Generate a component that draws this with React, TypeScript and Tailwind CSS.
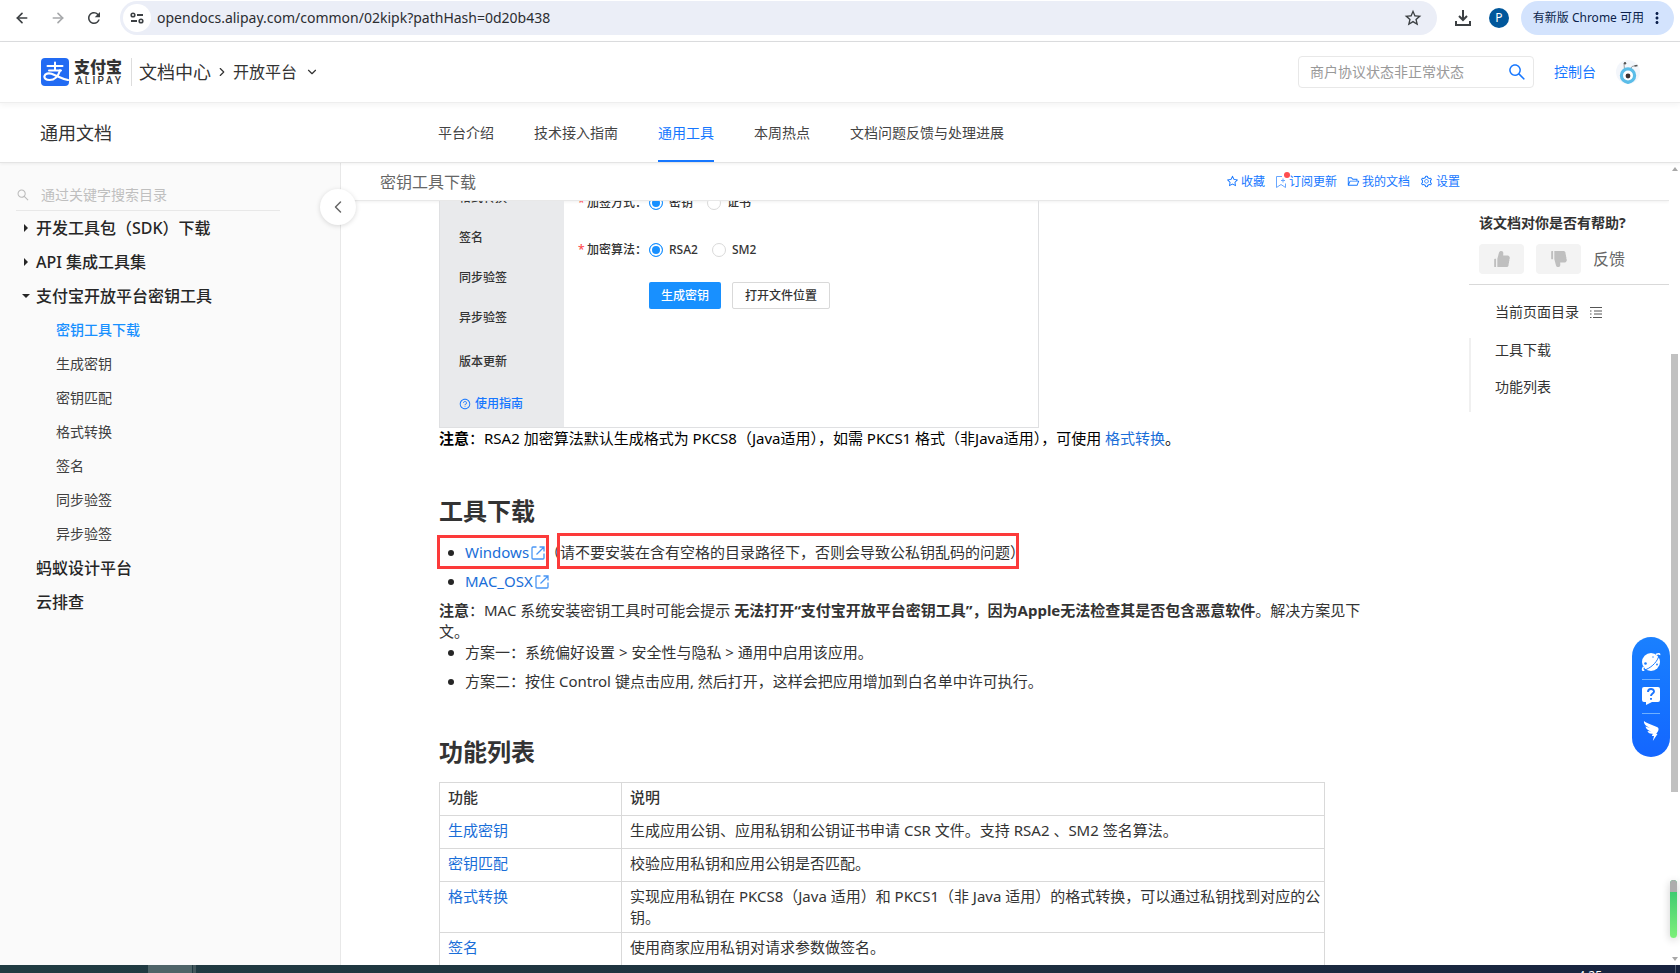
import type { ReactNode } from 'react';
import { useState } from 'react';
import {
  ArrowLeft,
  ArrowRight,
  ChevronDown,
  ChevronLeft,
  ChevronRight,
} from 'lucide-react';
import { MdRefresh, MdStarBorder, MdMoreVert } from 'react-icons/md';
import {
  AiFillDislike,
  AiFillLike,
  AiOutlineFolderOpen,
  AiOutlineQuestionCircle,
  AiOutlineSearch,
  AiOutlineSetting,
  AiOutlineStar,
} from 'react-icons/ai';

interface MenuItem {
  label: string;
  state?: 'open' | 'closed';
  children?: string[];
}

const tabs = ['平台介绍', '技术接入指南', '通用工具', '本周热点', '文档问题反馈与处理进展'];

const menu: MenuItem[] = [
  { label: '开发工具包（SDK）下载', state: 'closed' },
  { label: 'API 集成工具集', state: 'closed' },
  {
    label: '支付宝开放平台密钥工具',
    state: 'open',
    children: ['密钥工具下载', '生成密钥', '密钥匹配', '格式转换', '签名', '同步验签', '异步验签'],
  },
  { label: '蚂蚁设计平台' },
  { label: '云排查' },
];

const features = [
  { name: '生成密钥', desc: '生成应用公钥、应用私钥和公钥证书申请 CSR 文件。支持 RSA2 、SM2 签名算法。' },
  { name: '密钥匹配', desc: '校验应用私钥和应用公钥是否匹配。' },
  { name: '格式转换', desc: '实现应用私钥在 PKCS8（Java 适用）和 PKCS1（非 Java 适用）的格式转换，可以通过私钥找到对应的公钥。' },
  { name: '签名', desc: '使用商家应用私钥对请求参数做签名。' },
];

function BrowserBar() {
  return (
    <div className="flex h-[42px] shrink-0 items-start border-b border-[#dcdddf] bg-white pt-px pr-[6px] pl-3 text-[#3c4043]">
      <div className="flex h-[34px] w-[108px] shrink-0 items-center gap-4">
        <button aria-label="后退" className="flex size-5 items-center justify-center">
          <ArrowLeft className="size-4" strokeWidth={2.5} />
        </button>
        <button aria-label="前进" className="flex size-5 items-center justify-center text-[#a6a8aa]">
          <ArrowRight className="size-4" strokeWidth={2.5} />
        </button>
        <button aria-label="重新加载" className="flex size-5 items-center justify-center">
          <MdRefresh className="size-[18px]" />
        </button>
      </div>
      <div className="flex h-[34px] flex-1 items-center rounded-full bg-[#ebeef7] pr-[14px] pl-[3px]">
        <span className="flex size-7 items-center justify-center rounded-full bg-white">
          <svg viewBox="0 0 14 12" className="h-3 w-[14px]" fill="none" stroke="#3c4043" strokeWidth="2">
            <circle cx="3" cy="3" r="1.8" strokeWidth="1.6" />
            <path d="M7 3h6M1 9h6" />
            <circle cx="11" cy="9" r="1.8" strokeWidth="1.6" />
          </svg>
        </span>
        <input
          aria-label="地址"
          className="ml-[6px] flex-1 bg-transparent font-['Noto_Sans'] text-sm text-[#2b2d31] outline-none"
          defaultValue="opendocs.alipay.com/common/02kipk?pathHash=0d20b438"
        />
        <button aria-label="收藏此页">
          <MdStarBorder className="size-5" />
        </button>
      </div>
      <div className="flex h-[34px] items-center">
        <button aria-label="下载" className="ml-4 flex size-5 items-center justify-center">
          <svg viewBox="0 0 16 16" className="size-4" fill="none" stroke="currentColor" strokeWidth="2">
            <path d="M8 0v10M4 6l4 4 4-4M1 11v4h14v-4" />
          </svg>
        </button>
        <button className="ml-4 flex size-5 items-center justify-center rounded-full bg-[#01579b] text-xs text-white">
          P
        </button>
        <button className="ml-3 flex h-[34px] items-center rounded-full bg-[#d3e3fd] pr-2 pl-3 text-xs whitespace-nowrap text-[#0b1f4b]">
          <span className="font-['Noto_Sans','Noto_Sans_CJK_SC',sans-serif]">有新版 Chrome 可用</span>
          <MdMoreVert className="ml-1 size-[18px]" />
        </button>
      </div>
    </div>
  );
}

function AlipayMark() {
  return (
    <svg viewBox="0 0 28 28" className="size-7" fill="none" stroke="#fff" strokeLinecap="round">
      <rect width="28" height="28" rx="4" fill="#226bf3" stroke="none" />
      <path d="M6.500 8h15M14 4.500v8M8 12.500h12" strokeWidth="2" />
      <path d="M19 12.500c-1.500 5-5 9.500-10.500 9.500-3.500 0-5.500-1.800-5-4 .6-2.400 4-3.200 7-2.200 5 1.600 9.500 4.700 16.500 6.200" strokeWidth="2.200" />
    </svg>
  );
}

function Mascot() {
  return (
    <svg viewBox="0 0 24 24" className="size-6">
      <circle cx="12" cy="12" r="12" fill="#f3f6fb" />
      <path d="M8.500 10 8 3.500M14 10l2-3.500 4-1" stroke="#9aa0a6" strokeWidth="1" fill="none" />
      <circle cx="9" cy="3.300" r="1.200" fill="#555" />
      <path d="M18.500 6l3-.6" stroke="#555" strokeWidth="1.500" />
      <circle cx="12" cy="15.500" r="6.600" fill="#fff" stroke="#5bbde8" strokeWidth="3.200" />
      <path d="M9 22.500h6l-3 1.500z" fill="#5bbde8" />
      <circle cx="12" cy="16" r="2.400" fill="#3b3030" />
    </svg>
  );
}

function SiteHeader() {
  return (
    <header className="z-20 flex h-[61px] shrink-0 items-center border-b border-[#eee] bg-white pr-10 pl-[41px] shadow-[0_2px_6px_rgba(0,0,0,0.05)]">
      <a href="#" className="flex items-center gap-[5px]">
        <AlipayMark />
        <span className="flex w-12 flex-col text-[#333]">
          <span className="text-base leading-[18px] font-black">支付宝</span>
          <span className="flex justify-between pr-px pl-0.5 font-['Roboto'] text-[10px] leading-[10px] font-medium">
            {'ALIPAY'.split('').map((c, i) => (
              <span key={i}>{c}</span>
            ))}
          </span>
        </span>
      </a>
      <span className="mr-[7px] ml-[9px] h-7 w-px bg-[#ddd]" />
      <a href="#" className="text-lg text-[#333]">文档中心</a>
      <ChevronRight className="mx-1 size-[14px] text-[#333]" />
      <button className="flex items-center text-base text-[#333]">
        开放平台
        <ChevronDown className="ml-2 size-[14px]" />
      </button>
      <div className="flex-1" />
      <label className="flex h-8 w-[236px] items-center rounded border border-[#e8e8e8] pr-[6px] pl-[11px]">
        <input
          aria-label="搜索文档"
          className="min-w-0 flex-1 text-sm outline-none placeholder:text-[#999]"
          placeholder="商户协议状态非正常状态"
        />
        <AiOutlineSearch className="size-5 text-[#1677ff]" />
      </label>
      <a href="#" className="ml-5 text-sm text-[#1677ff]">控制台</a>
      <button aria-label="账号" className="ml-5">
        <Mascot />
      </button>
    </header>
  );
}

function SubNav() {
  return (
    <nav className="z-10 flex h-[60px] shrink-0 border-b border-[#e4e4e4] bg-white pl-10 shadow-[0_1px_3px_rgba(0,0,0,0.06)]">
      <h1 className="flex w-[398px] items-center text-lg text-[#333]">通用文档</h1>
      <div className="flex gap-10">
        {tabs.map((tab) => (
          <a
            key={tab}
            href="#"
            className={
              tab === '通用工具'
                ? 'flex items-center border-b-2 border-[#1677ff] pt-0.5 text-sm text-[#1677ff]'
                : 'flex items-center text-sm text-[#444]'
            }
          >
            {tab}
          </a>
        ))}
      </div>
    </nav>
  );
}

function Sidebar() {
  return (
    <aside className="relative w-[341px] shrink-0 border-r border-[#e8e8e8] bg-[#fafafa]">
      <label className="mt-[17px] mr-[60px] ml-4 flex h-[31px] items-center border-b border-[#e8e8e8]">
        <AiOutlineSearch className="size-[14px] text-[#bbb]" />
        <input
          aria-label="搜索目录"
          className="ml-[11px] flex-1 bg-transparent text-sm outline-none placeholder:text-[#bfbfbf]"
          placeholder="通过关键字搜索目录"
        />
      </label>
      <ul>
        {menu.map((item) => (
          <li key={item.label}>
            <a href="#" className="flex h-[34px] items-center pl-[22px] text-base font-medium text-[#262626]">
              <span className="w-[14px]">
                {item.state && (
                  <svg viewBox="0 0 8 8" className="size-2" fill="#262626">
                    {item.state === 'open' ? <path d="M0 2h8L4 6z" /> : <path d="M2 0l4 4-4 4z" />}
                  </svg>
                )}
              </span>
              {item.label}
            </a>
            {item.children && (
              <ul>
                {item.children.map((child, i) => (
                  <li key={child}>
                    <a
                      href="#"
                      className={
                        i === 0
                          ? 'flex h-[34px] items-center pl-14 text-sm font-medium text-[#1890ff]'
                          : 'flex h-[34px] items-center pl-14 text-sm text-[#404040]'
                      }
                    >
                      {child}
                    </a>
                  </li>
                ))}
              </ul>
            )}
          </li>
        ))}
      </ul>
      <button
        aria-label="收起目录"
        className="absolute top-[26px] -right-[16px] z-10 flex size-9 items-center justify-center rounded-full bg-white text-[#666] shadow-[0_1px_5px_rgba(0,0,0,0.15)]"
      >
        <ChevronLeft className="size-5" strokeWidth={1.8} />
      </button>
    </aside>
  );
}

function DocHeader() {
  return (
    <div className="flex h-[38px] shrink-0 items-center border-b border-[#e8e8e8] pr-[209px] pl-[39px] text-[#1677ff] shadow-[0_1px_3px_rgba(0,0,0,0.06)]">
      <h2 className="text-base text-[#666]">密钥工具下载</h2>
      <div className="ml-auto flex items-center gap-[10px] text-xs">
        <a href="#" className="flex items-center gap-[2px]">
          <AiOutlineStar className="size-[13px]" />
          收藏
        </a>
        <a href="#" className="relative flex items-center gap-[2px]">
          <svg viewBox="0 0 12 14" className="h-[14px] w-3" fill="none" stroke="#69a7ff" strokeWidth="1">
            <path d="M7 1.500H1.500v11L6 9.500l4.500 3v-4M8 3.500v4M6 5.500h4" />
          </svg>
          订阅更新
          <span className="absolute -top-0.5 left-[9px] size-[6px] rounded-full bg-[#ff4d4f]" />
        </a>
        <a href="#" className="flex items-center gap-[2px]">
          <AiOutlineFolderOpen className="size-[13px]" />
          我的文档
        </a>
        <a href="#" className="flex items-center gap-[3px]">
          <AiOutlineSetting className="size-[13px]" />
          设置
        </a>
      </div>
    </div>
  );
}

function RadioRow({ label, name, options }: { label: string; name: string; options: string[] }) {
  const [value, setValue] = useState(options[0]);

  return (
    <fieldset className="flex h-[47px] items-center">
      <span className="w-[9px] text-[#ff4d4f]">*</span>
      <span className="w-[62px] whitespace-nowrap">{label}：</span>
      <div className="flex gap-[14px]">
        {options.map((option) => (
          <label key={option} className="flex items-center gap-[6px]">
            <input
              type="radio"
              name={name}
              checked={value === option}
              onChange={() => setValue(option)}
              className="size-[14px] appearance-none rounded-full border border-[#d9d9d9] bg-white checked:border-[#1890ff] checked:bg-[#1890ff] checked:shadow-[inset_0_0_0_2px_white]"
            />
            {option}
          </label>
        ))}
      </div>
    </fieldset>
  );
}

function ToolPreview() {
  return (
    <div className="-mt-6 flex h-[251px] w-[600px] border border-[#dfe0e2] text-xs font-medium text-[#333]">
      <ul className="w-[124px] bg-[#e9eaec] pl-[19px]">
        {['格式转换', '签名', '同步验签', '异步验签'].map((item) => (
          <li key={item} className="flex h-10 items-center">{item}</li>
        ))}
        <li className="mt-1 flex h-10 items-center">版本更新</li>
        <li className="mt-0.5 flex h-10 items-center gap-1 text-[#1677ff]">
          <AiOutlineQuestionCircle className="size-3" />
          使用指南
        </li>
      </ul>
      <div className="pt-px pl-[14px]">
        <RadioRow label="加签方式" name="sign" options={['密钥', '证书']} />
        <RadioRow label="加密算法" name="algo" options={['RSA2', 'SM2']} />
        <div className="mt-[9px] ml-[71px] flex gap-[11px]">
          <button className="h-[27px] rounded-xs bg-[#1890ff] px-3 text-white">生成密钥</button>
          <button className="h-[27px] rounded-xs border border-[#d9d9d9] px-3">打开文件位置</button>
        </div>
      </div>
    </div>
  );
}

function ExternalIcon() {
  return (
    <svg viewBox="0 0 14 14" className="ml-0.5 inline-block size-[14px] align-[-2px]" fill="none" stroke="#4a97f5" strokeWidth="1.300">
      <path d="M5.500 1H2a1 1 0 0 0-1 1v10a1 1 0 0 0 1 1h10a1 1 0 0 0 1-1V7.500M5.500 8.500 12.800 1.200M8.500 1H13v4.500" />
    </svg>
  );
}

function Bullet({ children }: { children: ReactNode }) {
  return (
    <li className="relative flex h-[29px] items-center">
      <span className="mr-[11px] ml-[9px] size-[6px] rounded-full bg-[#262626]" />
      <span>{children}</span>
    </li>
  );
}

function Article() {
  return (
    <article className="min-w-0 flex-1 overflow-hidden pr-[90px] pl-[98px] font-['Noto_Sans','Noto_Sans_CJK_SC',sans-serif] text-[15px] leading-[21px] text-[#333]">
      <ToolPreview />
      <p className="text-black">
        <b className="font-bold">注意</b>：RSA2 加密算法默认生成格式为 PKCS8（Java适用），如需 PKCS1 格式（非Java适用），可使用{' '}
        <a href="#" className="text-[#1a6ed8]">格式转换</a>。
      </p>
      <h2 className="mt-[46px] text-2xl leading-8 font-bold">工具下载</h2>
      <ul className="mt-[11px]">
        <Bullet>
          <a href="#" className="text-[#1a6ed8]">
            Windows
            <ExternalIcon />
          </a>
          （请不要安装在含有空格的目录路径下，否则会导致公私钥乱码的问题）
          <span className="absolute -top-[3px] -left-0.5 h-[34px] w-[112px] border-[3px] border-[#fc3a3a]" />
          <span className="absolute -top-[5px] left-[118px] h-9 w-[462px] border-[3px] border-[#fc3a3a]" />
        </Bullet>
        <Bullet>
          <a href="#" className="text-[#1a6ed8]">
            MAC_OSX
            <ExternalIcon />
          </a>
        </Bullet>
      </ul>
      <p className="mt-1">
        <b>注意</b>：MAC 系统安装密钥工具时可能会提示 <b>无法打开“支付宝开放平台密钥工具”，因为Apple无法检查其是否包含恶意软件</b>。解决方案见下文。
      </p>
      <ul className="-mt-1">
        <Bullet>方案一：系统偏好设置 &gt; 安全性与隐私 &gt; 通用中启用该应用。</Bullet>
        <Bullet>方案二：按住 Control 键点击应用, 然后打开，这样会把应用增加到白名单中许可执行。</Bullet>
      </ul>
      <h2 className="mt-10 text-2xl leading-8 font-bold">功能列表</h2>
      <table className="mt-[14px] w-[886px] table-fixed border-collapse text-left">
        <thead>
          <tr>
            <th className="h-[33px] w-[182px] border border-[#d9d9d9] py-1 pl-2 align-top font-medium">功能</th>
            <th className="h-[33px] border border-[#d9d9d9] py-1 pl-2 align-top font-medium">说明</th>
          </tr>
        </thead>
        <tbody>
          {features.map((f) => (
            <tr key={f.name}>
              <td className="h-[33px] border border-[#d9d9d9] py-1 pl-2 align-top">
                <a href="#" className="text-[#1a6ed8]">{f.name}</a>
              </td>
              <td className="h-[33px] border border-[#d9d9d9] py-1 pl-2 align-top">{f.desc}</td>
            </tr>
          ))}
        </tbody>
      </table>
    </article>
  );
}

function DocAside() {
  return (
    <aside className="w-[200px] shrink-0 text-sm text-[#333]">
      <div className="border-b border-[#d9d9d9] pb-[10px] pl-[10px]">
        <h3 className="pt-3 leading-5 font-bold">该文档对你是否有帮助?</h3>
        <div className="mt-[11px] flex items-center gap-3 text-[#bfbfbf]">
          <button aria-label="有帮助" className="flex h-[30px] w-[45px] items-center justify-center rounded bg-[#f3f3f3]">
            <AiFillLike className="size-5" />
          </button>
          <button aria-label="没有帮助" className="flex h-[30px] w-[45px] items-center justify-center rounded bg-[#f3f3f3]">
            <AiFillDislike className="size-5" />
          </button>
          <button className="text-base text-[#666]">反馈</button>
        </div>
      </div>
      <div className="mt-[17px] flex items-center gap-[11px] pl-[26px] leading-5">
        当前页面目录
        <svg viewBox="0 0 12 11" className="h-[11px] w-3" stroke="#555" strokeWidth="1" fill="none">
          <path d="M0 .5h12M4 4h8M4 7h8M0 10.500h1.500M3 10.500h9M0 4h1.500M0 7h1.500" />
        </svg>
      </div>
      <ul className="mt-4 border-l-2 border-[#f0f0f0] pl-6">
        <li className="flex h-[37px] items-start pt-0.5">
          <a href="#">工具下载</a>
        </li>
        <li className="flex h-[37px] items-start pt-0.5">
          <a href="#">功能列表</a>
        </li>
      </ul>
    </aside>
  );
}

function FloatingDock() {
  return (
    <div className="absolute top-[474px] right-[10px] z-20 flex h-[120px] w-[38px] flex-col items-center rounded-full bg-linear-to-b from-[#1a80ff] to-[#1466ff] pt-[15px]">
      <button aria-label="探索">
        <svg viewBox="0 0 20 20" className="size-5">
          <circle cx="10" cy="10" r="9" fill="#fff" />
          <path d="M15 2.500c2.500-1.200 4-1 3.500.5M2.500 15c-1.500 2.500-1.200 4 .8 3" stroke="#fff" strokeWidth="1.600" fill="none" />
          <path d="M3.500 18C9 16.500 15.500 11 17.500 5" stroke="#1a7cff" strokeWidth="1" fill="none" />
          <circle cx="4.500" cy="11.500" r="1.300" fill="#1a7cff" />
          <circle cx="16" cy="12.500" r=".9" fill="#1a7cff" />
          <circle cx="12" cy="5" r=".7" fill="#1a7cff" />
        </svg>
      </button>
      <span className="mt-[7px] h-px w-[18px] bg-[#6fb0ff]" />
      <button aria-label="帮助" className="mt-[7px]">
        <svg viewBox="0 0 18 18" className="size-[18px]" fill="none">
          <path d="M2 0h14a2 2 0 0 1 2 2v11a2 2 0 0 1-2 2h-6l-6 3v-3H2a2 2 0 0 1-2-2V2a2 2 0 0 1 2-2z" fill="#fff" />
          <path d="M6 5c0-4 6-3.800 6-.5 0 2-3 2.200-3 4.500M9 11v1.800" stroke="#1a74ff" strokeWidth="1.900" />
        </svg>
      </button>
      <span className="mt-2 h-px w-[18px] bg-[#6fb0ff]" />
      <button aria-label="钉钉" className="mt-[7px]">
        <svg viewBox="0 0 18 20" className="h-5 w-[18px]" fill="#fff">
          <path d="M2 0c3 2.500 9 4 13.500 6.200 1.300.7 1.300 2.300.5 4L14.200 13h1.300L10.800 20l1.200-5H9.800l1-2.300C7.500 13 6 11.500 5.500 10l4 .5C6 9.500 4 8 3.500 5.500l4.500 1.500C4 5.200 1.500 3 2 0z" />
        </svg>
      </button>
    </div>
  );
}

function ScrollRail() {
  return (
    <div className="relative flex w-[11px] shrink-0 flex-col items-center bg-white py-1">
      <svg viewBox="0 0 6 4" className="h-1 w-[6px]" fill="#a8a8a8">
        <path d="M3 0l3 4H0z" />
      </svg>
      <span className="mt-[183px] h-[438px] w-[7px] bg-[#c1c1c1]" />
      <span className="absolute top-[717px] right-[3px] flex h-[58px] w-[7px] flex-col overflow-hidden rounded-full bg-linear-to-b from-[#26c26e] to-[#7cf07a] shadow-[0_2px_8px_rgba(0,0,0,0.2)]">
        <span className="h-3 bg-[#adadad]" />
      </span>
      <svg viewBox="0 0 6 4" className="mt-auto h-1 w-[6px]" fill="#a8a8a8">
        <path d="M3 4L0 0h6z" />
      </svg>
    </div>
  );
}

function Taskbar() {
  return (
    <div className="flex h-2 shrink-0 overflow-hidden bg-linear-to-r from-[#203c42] via-[#1e323f] to-[#18233f]">
      <span className="ml-[148px] w-11 bg-[#4e6468]" />
      <span className="ml-px w-[3px] bg-[#43575c]" />
      <span className="mt-[3px] mr-[73px] ml-auto text-xs leading-4 text-white">4:25</span>
      <span className="mr-1 w-px bg-[#5b6478]" />
    </div>
  );
}

export default function App() {
  return (
    <div className="flex h-screen flex-col overflow-hidden bg-white font-['Noto_Sans','Noto_Sans_CJK_SC',sans-serif]">
      <BrowserBar />
      <SiteHeader />
      <SubNav />
      <div className="relative flex min-h-0 flex-1">
        <Sidebar />
        <main className="flex min-w-0 flex-1 flex-col">
          <DocHeader />
          <div className="flex min-h-0 flex-1">
            <Article />
            <DocAside />
          </div>
        </main>
        <ScrollRail />
        <FloatingDock />
      </div>
      <Taskbar />
    </div>
  );
}
